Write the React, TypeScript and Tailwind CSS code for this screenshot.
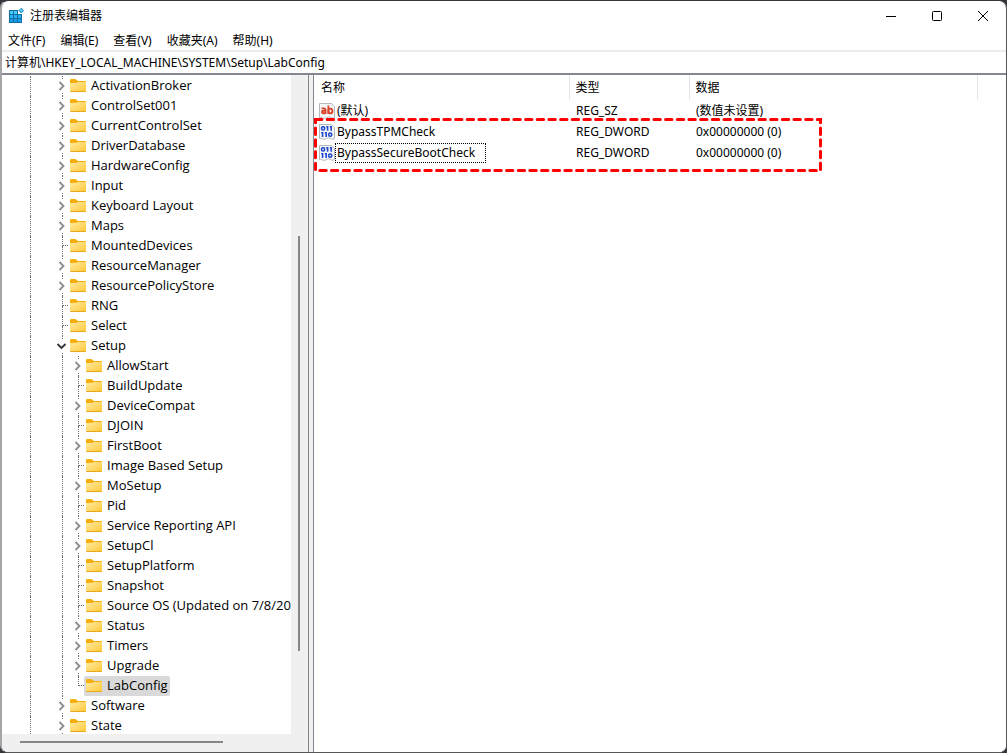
import clsx from 'clsx';

type TreeNode = {
  name: string;
  level: 1 | 2;
  expandable?: boolean;
  open?: boolean;
  selected?: boolean;
  last?: boolean;
};

const MENU = ['文件(F)', '编辑(E)', '查看(V)', '收藏夹(A)', '帮助(H)'];

const TREE: TreeNode[] = [
  { name: 'ActivationBroker', level: 1, expandable: true },
  { name: 'ControlSet001', level: 1, expandable: true },
  { name: 'CurrentControlSet', level: 1, expandable: true },
  { name: 'DriverDatabase', level: 1, expandable: true },
  { name: 'HardwareConfig', level: 1, expandable: true },
  { name: 'Input', level: 1, expandable: true },
  { name: 'Keyboard Layout', level: 1, expandable: true },
  { name: 'Maps', level: 1, expandable: true },
  { name: 'MountedDevices', level: 1 },
  { name: 'ResourceManager', level: 1, expandable: true },
  { name: 'ResourcePolicyStore', level: 1, expandable: true },
  { name: 'RNG', level: 1 },
  { name: 'Select', level: 1 },
  { name: 'Setup', level: 1, expandable: true, open: true },
  { name: 'AllowStart', level: 2, expandable: true },
  { name: 'BuildUpdate', level: 2 },
  { name: 'DeviceCompat', level: 2, expandable: true },
  { name: 'DJOIN', level: 2 },
  { name: 'FirstBoot', level: 2, expandable: true },
  { name: 'Image Based Setup', level: 2 },
  { name: 'MoSetup', level: 2, expandable: true },
  { name: 'Pid', level: 2 },
  { name: 'Service Reporting API', level: 2, expandable: true },
  { name: 'SetupCl', level: 2, expandable: true },
  { name: 'SetupPlatform', level: 2 },
  { name: 'Snapshot', level: 2 },
  { name: 'Source OS (Updated on 7/8/2021)', level: 2 },
  { name: 'Status', level: 2, expandable: true },
  { name: 'Timers', level: 2, expandable: true },
  { name: 'Upgrade', level: 2, expandable: true },
  { name: 'LabConfig', level: 2, selected: true, last: true },
  { name: 'Software', level: 1, expandable: true },
  { name: 'State', level: 1, expandable: true },
];

const VALUES = [
  { name: '(默认)', kind: 'string', type: 'REG_SZ', data: '(数值未设置)' },
  { name: 'BypassTPMCheck', kind: 'dword', type: 'REG_DWORD', data: '0x00000000 (0)' },
  { name: 'BypassSecureBootCheck', kind: 'dword', type: 'REG_DWORD', data: '0x00000000 (0)', focused: true },
];

function AppIcon() {
  return (
    <svg className="w-4 h-4" viewBox="0 0 16 16" aria-hidden="true">
      <path d="M1 2h9v4h4v9H1z" fill="#0f6ea6" />
      <path d="M2 3h3v3H2zM6 3h3v3H6z" fill="#4ccbf7" />
      <path d="M2 7h3v3H2zM6 7h3v3H6zM10 7h3v3h-3z" fill="#2cb0ee" />
      <path d="M2 11h3v3H2zM6 11h3v3H6zM10 11h3v3h-3z" fill="#1c9be2" />
      <path d="M13.300 0.200l2.400 2.400-2.400 2.400-2.400-2.400z" fill="#4ccbf7" stroke="#0f6ea6" strokeWidth="0.800" />
    </svg>
  );
}

function FolderIcon() {
  return (
    <svg className="w-4 h-4 shrink-0" viewBox="0 0 16 16" aria-hidden="true">
      <defs>
        <linearGradient id="folder" x1="0" y1="0" x2="1" y2="1">
          <stop offset="0" stopColor="#ffe9a2" />
          <stop offset="1" stopColor="#ffc937" />
        </linearGradient>
      </defs>
      <path d="M0 2q0-1 1-1h4.500L8 3h7q1 0 1 1v3H0z" fill="#f5b00e" />
      <path d="M0 5h6L8 4h8v9q0 1-1 1H1q-1 0-1-1z" fill="url(#folder)" />
      <path d="M0.300 13.500h15.400" stroke="#e9a81c" strokeWidth="1" />
    </svg>
  );
}

function ValueIcon({ kind }: { kind: string }) {
  return (
    <svg className="w-4 h-4 shrink-0" viewBox="0 0 16 16" aria-hidden="true">
      <path
        d="M0.500 0.500h12l3 3v11q-2 1.500-4 0t-4 0-4 0.500-3-0.500z"
        fill="#f6f7f8"
        stroke="#b4b8bc"
      />
      {kind === 'string' ? (
        <g fill="none" stroke="#d9452b" strokeWidth="1.900">
          <path d="M2.500 5.400h2.300q1.700 0 1.700 1.600v4" />
          <path d="M6.500 7.800H4.200a1.250 1.250 0 0 0 0 2.500H6.500" />
          <path d="M9.400 2.500v8.500" />
          <ellipse cx="11.400" cy="8" rx="2" ry="2.400" />
        </g>
      ) : (
        <g fill="none" stroke="#2148cf" strokeWidth="1.600">
          <rect x="2.600" y="2.800" width="3" height="3.200" rx="1.300" />
          <path d="M7.200 2.800h1.400v4M10.800 2.800h1.400v4" />
          <path d="M2.200 8.800h1.400v4.200M5.800 8.800h1.400v4.200" />
          <rect x="9.700" y="9" width="3" height="3.200" rx="1.300" />
        </g>
      )}
    </svg>
  );
}

function Chevron({ open }: { open?: boolean }) {
  return (
    <svg className="w-4 h-3.5 shrink-0" viewBox="0 0 16 14" fill="none" aria-hidden="true">
      {open ? (
        <path d="M3.500 5L7.500 9l4-4" stroke="#333333" strokeWidth="1.800" />
      ) : (
        <path d="M5.500 3l4 4-4 4" stroke="#8c8c8c" strokeWidth="1.800" />
      )}
    </svg>
  );
}

function Branch({ node }: { node: TreeNode }) {
  if (node.expandable) {
    return (
      <span className="flex flex-col w-3.5 h-5 shrink-0">
        <span className="ml-2 h-[3px] border-l border-dotted border-[#707070]" />
        <Chevron open={node.open} />
        <span className="ml-2 h-[3px] border-l border-dotted border-[#707070]" />
      </span>
    );
  }
  return (
    <span className="flex flex-col w-3.5 h-5 shrink-0 pl-2">
      <span className="h-2.5 border-l border-b border-dotted border-[#707070]" />
      {!node.last && <span className="h-2.5 border-l border-dotted border-[#707070]" />}
    </span>
  );
}

function TreeRow({ node }: { node: TreeNode }) {
  return (
    <li
      role="treeitem"
      aria-selected={!!node.selected}
      aria-expanded={node.expandable ? !!node.open : undefined}
      className="flex h-5 shrink-0"
    >
      <span className="w-7 shrink-0" />
      <span className="w-6 shrink-0 border-l border-dotted border-[#707070]" />
      {node.level === 2 && (
        <span className="w-4 shrink-0 pl-2 flex">
          <span className="border-l border-dotted border-[#707070]" />
        </span>
      )}
      <Branch node={node} />
      <button
        type="button"
        className={clsx(
          'flex items-center gap-[5px] h-5 pl-0.5 pr-0.5 rounded-xs whitespace-nowrap',
          node.selected && 'bg-[#d9d9d9]',
        )}
      >
        <FolderIcon />
        <span className="pb-0.5">{node.name}</span>
      </button>
    </li>
  );
}

function TitleBar() {
  return (
    <header className="flex items-center h-[30px] pl-1.5 shrink-0">
      <AppIcon />
      <h1 className="pl-1.5 text-[12px]">注册表编辑器</h1>
      <div className="ml-auto flex">
        <button type="button" aria-label="最小化" className="w-[46px] h-7 flex items-center justify-center">
          <svg width="10" height="10" viewBox="0 0 10 10"><path d="M0 5.500h10" stroke="#000" /></svg>
        </button>
        <button type="button" aria-label="最大化" className="w-[46px] h-7 flex items-center justify-center">
          <svg width="10" height="10" viewBox="0 0 10 10"><rect x="0.500" y="0.500" width="9" height="9" rx="1" fill="none" stroke="#000" /></svg>
        </button>
        <button type="button" aria-label="关闭" className="w-[46px] h-7 flex items-center justify-center">
          <svg width="10" height="10" viewBox="0 0 10 10"><path d="M0 0l10 10M10 0L0 10" stroke="#000" /></svg>
        </button>
      </div>
    </header>
  );
}

function KeyTree() {
  return (
    <nav aria-label="注册表项" className="flex flex-col w-[307px] shrink-0 bg-[#f0f0f0] border-r border-[#838790]">
      <div className="flex flex-1 min-h-0">
        <ul
          role="tree"
          className="flex flex-col flex-1 min-w-0 overflow-hidden bg-white pt-px font-['Open_Sans','Noto_Sans_CJK_SC',sans-serif] text-[13px] leading-5"
        >
          {TREE.map((node) => (
            <TreeRow key={node.name} node={node} />
          ))}
        </ul>
        <div className="w-[17px] shrink-0 pl-[7px] pt-[161px]">
          <div className="w-0.5 h-[415px] bg-[#868686]" />
        </div>
      </div>
      <div className="h-[18px] shrink-0 pl-[18px] pt-[7px]">
        <div className="w-[203px] h-0.5 bg-[#868686]" />
      </div>
    </nav>
  );
}

function ValueList() {
  return (
    <main className="relative flex-1 min-w-0 border-l border-[#838790] bg-white">
      <table className="w-full table-fixed text-left text-[12px]">
        <colgroup>
          <col className="w-[255px]" />
          <col className="w-[120px]" />
          <col className="w-72" />
          <col />
        </colgroup>
        <thead>
          <tr className="h-[25px]">
            <th className="pl-[7px] font-normal border-r border-[#e5e5e5]">名称</th>
            <th className="pl-1.5 font-normal border-r border-[#e5e5e5]">类型</th>
            <th className="pl-1.5 font-normal border-r border-[#e5e5e5]">数据</th>
            <th />
          </tr>
        </thead>
        <tbody>
          {VALUES.map((value) => (
            <tr key={value.name} className="h-[21px]">
              <td className="p-0 pl-[5px]">
                <span className="flex items-center">
                  <ValueIcon kind={value.kind} />
                  <span
                    className={clsx(
                      'h-5 leading-[18px] pl-px pr-2.5 border border-dotted whitespace-nowrap',
                      value.focused ? 'border-black' : 'border-transparent',
                    )}
                  >
                    {value.name}
                  </span>
                </span>
              </td>
              <td className="p-0 pl-[7px]">{value.type}</td>
              <td className="p-0 pl-[7px]">{value.data}</td>
              <td />
            </tr>
          ))}
        </tbody>
      </table>
      {/* marks the two bypass values */}
      <svg className="absolute left-0 top-[43px] w-[509px] h-[55px]" viewBox="0 0 509 55" fill="none" aria-hidden="true">
        <rect
          x="1.500"
          y="1.500"
          width="505"
          height="51"
          stroke="#ff0000"
          strokeWidth="3"
          strokeLinecap="round"
          strokeDasharray="6.400 5.270"
        />
      </svg>
    </main>
  );
}

export default function App() {
  return (
    <div className="h-screen bg-[#35343a]">
      <div className="flex flex-col h-full bg-white border-t border-r border-b border-l-2 border-t-[#35343a] border-r-[#55565c] border-b-[#55565c] border-l-[#a5a5a8] rounded-lg overflow-hidden font-['Noto_Sans','Noto_Sans_CJK_SC',sans-serif] text-[12px] text-black">
        <TitleBar />
        <nav aria-label="菜单" className="flex h-[19px] shrink-0 items-end gap-[3px]">
          {MENU.map((item) => (
            <button key={item} type="button" className="px-1.5 whitespace-nowrap">{item}</button>
          ))}
        </nav>
        <div className="h-[25px] shrink-0 border-t-2 border-b-2 border-t-[#ececec] border-b-[#838790] flex items-center">
          <input
            aria-label="地址"
            readOnly
            value="计算机\HKEY_LOCAL_MACHINE\SYSTEM\Setup\LabConfig"
            className="w-full pl-[3px] pt-px outline-none"
          />
        </div>
        <div className="flex flex-1 min-h-0 gap-1 bg-[#f0f0f0]">
          <KeyTree />
          <ValueList />
        </div>
      </div>
    </div>
  );
}
